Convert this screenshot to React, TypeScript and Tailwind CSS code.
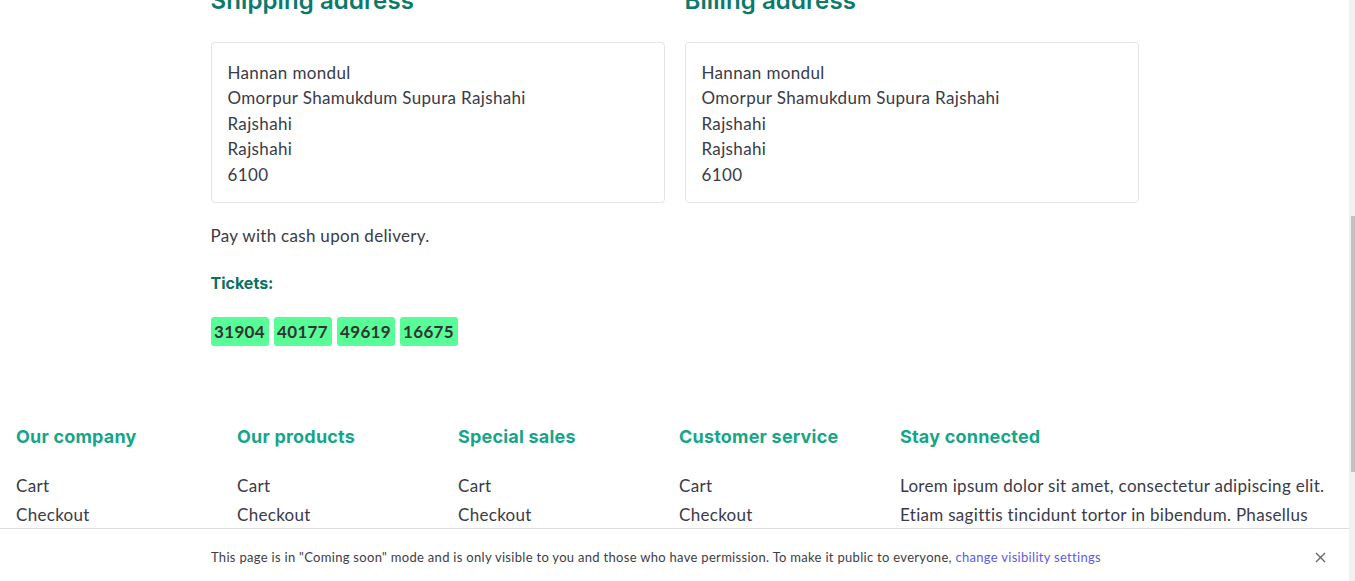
import React from "react";

const body = { fontFamily: "Lato, 'Open Sans', sans-serif" } as const;
const head = { fontFamily: "Inter, 'Noto Sans', sans-serif" } as const;

function AddressCard() {
  return (
    <div className="rounded-[4px] border border-[#e4e4e4] px-4 pb-[15px] pt-[17px] text-[17px] leading-[25.4px] tracking-[0.35px] text-[#3a3a48]">
      <div>Hannan mondul</div>
      <div>Omorpur Shamukdum Supura Rajshahi</div>
      <div>Rajshahi</div>
      <div>Rajshahi</div>
      <div>6100</div>
    </div>
  );
}

const cols = ["Our company", "Our products", "Special sales", "Customer service"];

export default function App() {
  return (
    <div className="relative h-[581px] w-[1355px] overflow-hidden bg-white" style={body}>
      <div className="mt-[-14px] w-[1349px]">
        <div className="mx-auto w-[928px]">
          <div className="grid grid-cols-2 gap-5">
            <div>
              <h2 className="text-[24px] font-semibold leading-[30px] tracking-[0.1px] text-[#0c7a6b]" style={head}>
                Shipping address
              </h2>
              <div className="mt-[26px]">
                <AddressCard />
              </div>
            </div>
            <div>
              <h2 className="text-[24px] font-semibold leading-[30px] tracking-[0.1px] text-[#0c7a6b]" style={head}>
                Billing address
              </h2>
              <div className="mt-[26px]">
                <AddressCard />
              </div>
            </div>
          </div>
          <p className="mt-[20px] text-[17px] leading-[25px] tracking-[0.3px] text-[#3a3a48]">
            Pay with cash upon delivery.
          </p>
          <p className="mt-[23px] text-[16px] font-bold leading-[25px] text-[#0c6f63]" style={head}>
            Tickets:
          </p>
          <div className="mt-[21px] flex gap-[5px]">
            {["31904", "40177", "49619", "16675"].map((t) => (
              <span
                key={t}
                className="flex h-[29px] w-[58px] items-center justify-center rounded-[3px] bg-[#58fd97] text-[17px] font-bold tracking-[0.3px] text-[#333333]"
              >
                {t}
              </span>
            ))}
          </div>
        </div>

        <div className="mt-[79px] grid grid-cols-[221px_221px_221px_221px_1fr] pl-4 pr-4">
          {cols.map((c) => (
            <div key={c}>
              <h3 className="text-[18px] font-bold leading-[24px] tracking-[0.2px] text-[#17a589]" style={head}>
                {c}
              </h3>
              <ul className="mt-[22px] text-[17px] leading-[29px] tracking-[0.3px] text-[#3a3a48]">
                <li>Cart</li>
                <li>Checkout</li>
                <li>My account</li>
                <li>Shop</li>
              </ul>
            </div>
          ))}
          <div>
            <h3 className="text-[18px] font-bold leading-[24px] tracking-[0.2px] text-[#17a589]" style={head}>
              Stay connected
            </h3>
            <p className="mt-[22px] text-[17px] leading-[29px] tracking-[0.3px] text-[#3a3a48]">
              Lorem ipsum dolor sit amet, consectetur adipiscing elit. Etiam sagittis tincidunt tortor in bibendum. Phasellus
              ullamcorper luctus nunc, vitae ultricies turpis facilisis at.
            </p>
          </div>
        </div>
      </div>

      <div className="absolute bottom-0 left-0 h-[53px] w-[1349px] border-t border-[#dedede] bg-white">
        <div className="ml-[211px] mt-[19px] text-[13px] leading-[18px] tracking-[0.3px] text-[#3d3d45]">
          This page is in "Coming soon" mode and is only visible to you and those who have permission. To make it public
          to everyone, <span className="text-[#5c5ce6]">change visibility settings</span>
        </div>
        <div className="absolute right-[23px] top-[23px] text-[#666]">
          <svg width="11" height="11" viewBox="0 0 11 11" fill="none" stroke="currentColor" strokeWidth="1.4">
            <path d="M1 1L10 10M10 1L1 10" />
          </svg>
        </div>
      </div>

      <div className="absolute right-0 top-0 h-full w-[6px] bg-[#f1f1f1]">
        <div className="absolute left-[2px] top-[216px] h-[256px] w-[4px] bg-[#c1c1c1]" />
      </div>
    </div>
  );
}
